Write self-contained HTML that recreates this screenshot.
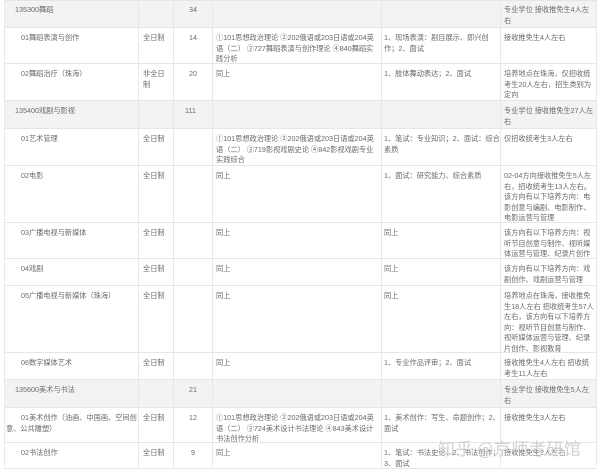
<!DOCTYPE html>
<html><head><meta charset="utf-8"><style>
body{margin:0;width:600px;height:473px;background:#fff;position:relative;overflow:hidden;font-family:"Liberation Sans","Noto Sans CJK SC",sans-serif;font-size:7.2px;color:#6a6a6a;line-height:10.6px}
.r{position:absolute;left:4px;width:592px;border-top:1px solid #e6e6e6}
.g{background:#f3f3f3}
.v{position:absolute;top:0;height:467px;border-left:1px solid #e8e8e8}
.c{position:absolute;padding-top:3px;box-sizing:border-box}
.wm{position:absolute;left:438px;top:438px;font-size:17px;color:#d0d0d0;letter-spacing:0.5px;font-family:"Noto Sans CJK SC",sans-serif;line-height:20px}
</style></head><body>
<div class="r g" style="top:0;height:27px"></div>
<div class="r" style="top:27px;height:36px"></div>
<div class="r" style="top:63px;height:37px"></div>
<div class="r g" style="top:100px;height:28px"></div>
<div class="r" style="top:128px;height:37px"></div>
<div class="r" style="top:165px;height:57px"></div>
<div class="r" style="top:222px;height:36px"></div>
<div class="r" style="top:258px;height:27px"></div>
<div class="r" style="top:285px;height:67px"></div>
<div class="r" style="top:352px;height:27px"></div>
<div class="r g" style="top:379px;height:28px"></div>
<div class="r" style="top:407px;height:35px"></div>
<div class="r" style="top:442px;height:25px;border-bottom:1px solid #e6e6e6"></div>
<div class="v" style="left:4px"></div><div class="v" style="left:138px"></div><div class="v" style="left:173px"></div><div class="v" style="left:212px"></div><div class="v" style="left:381px"></div><div class="v" style="left:500px"></div><div class="v" style="left:596px"></div>

<div class="c" style="left:15px;top:2px">135300舞蹈</div>
<div class="c" style="left:189px;top:2px">34</div>
<div class="c" style="left:504px;top:2px;width:92px">专业学位 接收推免生4人左右</div>

<div class="c" style="left:21px;top:30px">01舞蹈表演与创作</div>
<div class="c" style="left:143px;top:30px">全日制</div>
<div class="c" style="left:189px;top:30px">14</div>
<div class="c" style="left:216px;top:30px;width:164px">①101思想政治理论 ②202俄语或203日语或204英语（二） ③727舞蹈表演与创作理论 ④840舞蹈实践分析</div>
<div class="c" style="left:384px;top:30px;width:116px">1、现场表演：剧目展示、即兴创作；2、面试</div>
<div class="c" style="left:504px;top:30px">接收推免生4人左右</div>

<div class="c" style="left:21px;top:66px">02舞蹈治疗（珠海）</div>
<div class="c" style="left:143px;top:66px;width:28px">非全日制</div>
<div class="c" style="left:189px;top:66px">20</div>
<div class="c" style="left:216px;top:66px">同上</div>
<div class="c" style="left:384px;top:66px">1、肢体舞动表达；2、面试</div>
<div class="c" style="left:504px;top:66px;width:92px">培养地点在珠海，仅招收统考生20人左右，招生类别为定向</div>

<div class="c" style="left:15px;top:103px">135400戏剧与影视</div>
<div class="c" style="left:185px;top:103px">111</div>
<div class="c" style="left:504px;top:103px;width:92px">专业学位 接收推免生27人左右</div>

<div class="c" style="left:21px;top:131px">01艺术管理</div>
<div class="c" style="left:143px;top:131px">全日制</div>
<div class="c" style="left:216px;top:131px;width:164px">①101思想政治理论 ②202俄语或203日语或204英语（二） ③719影视戏剧史论 ④842影视戏剧专业实践综合</div>
<div class="c" style="left:384px;top:131px;width:116px">1、笔试：专业知识；2、面试：综合素质</div>
<div class="c" style="left:504px;top:131px">仅招收统考生3人左右</div>

<div class="c" style="left:21px;top:168px">02电影</div>
<div class="c" style="left:143px;top:168px">全日制</div>
<div class="c" style="left:216px;top:168px">同上</div>
<div class="c" style="left:384px;top:168px">1、面试：研究能力、综合素质</div>
<div class="c" style="left:504px;top:168px;width:92px">02-04方向接收推免生5人左右，招收统考生13人左右。该方向有以下培养方向：电影创意与编剧、电影制作、电影运营与管理</div>

<div class="c" style="left:21px;top:225px">03广播电视与新媒体</div>
<div class="c" style="left:143px;top:225px">全日制</div>
<div class="c" style="left:216px;top:225px">同上</div>
<div class="c" style="left:384px;top:225px">同上</div>
<div class="c" style="left:504px;top:225px;width:92px">该方向有以下培养方向：视听节目创意与制作、视听媒体运营与管理、纪录片创作</div>

<div class="c" style="left:21px;top:261px">04戏剧</div>
<div class="c" style="left:143px;top:261px">全日制</div>
<div class="c" style="left:216px;top:261px">同上</div>
<div class="c" style="left:384px;top:261px">同上</div>
<div class="c" style="left:504px;top:261px;width:92px">该方向有以下培养方向：戏剧创作、戏剧运营与管理</div>

<div class="c" style="left:21px;top:288px">05广播电视与新媒体（珠海）</div>
<div class="c" style="left:143px;top:288px">全日制</div>
<div class="c" style="left:216px;top:288px">同上</div>
<div class="c" style="left:384px;top:288px">同上</div>
<div class="c" style="left:504px;top:288px;width:92px">培养地点在珠海，接收推免生18人左右 招收统考生57人左右，该方向有以下培养方向：视听节目创意与制作、视听媒体运营与管理、纪录片创作、影视教育</div>

<div class="c" style="left:21px;top:355px">06数字媒体艺术</div>
<div class="c" style="left:143px;top:355px">全日制</div>
<div class="c" style="left:216px;top:355px">同上</div>
<div class="c" style="left:384px;top:355px">1、专业作品评审；2、面试</div>
<div class="c" style="left:504px;top:355px;width:92px">接收推免生4人左右 招收统考生11人左右</div>

<div class="c" style="left:15px;top:382px">135600美术与书法</div>
<div class="c" style="left:189px;top:382px">21</div>
<div class="c" style="left:504px;top:382px;width:92px">专业学位 接收推免生5人左右</div>

<div class="c" style="left:6px;top:410px;width:132px;text-indent:15px">01美术创作（油画、中国画、空间创意、公共雕塑）</div>
<div class="c" style="left:143px;top:410px">全日制</div>
<div class="c" style="left:189px;top:410px">12</div>
<div class="c" style="left:216px;top:410px;width:164px">①101思想政治理论 ②202俄语或203日语或204英语（二） ③724美术设计书法理论 ④843美术设计书法创作分析</div>
<div class="c" style="left:384px;top:410px;width:116px">1、美术创作：写生、命题创作；2、面试</div>
<div class="c" style="left:504px;top:410px">接收推免生3人左右</div>

<div class="c" style="left:21px;top:445px">02书法创作</div>
<div class="c" style="left:143px;top:445px">全日制</div>
<div class="c" style="left:191px;top:445px">9</div>
<div class="c" style="left:216px;top:445px">同上</div>
<div class="c" style="left:384px;top:445px;width:116px">1、笔试：书法史论；2、书法创作；3、面试</div>
<div class="c" style="left:504px;top:445px">接收推免生2人左右</div>

<div class="wm">知乎 @京师考研馆</div>
</body></html>
